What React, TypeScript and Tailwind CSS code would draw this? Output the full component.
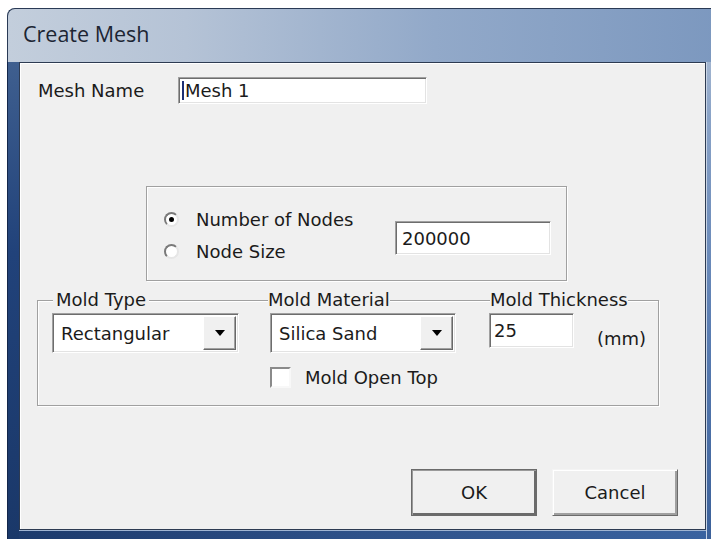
import React from "react";

const ui = { fontFamily: '"DejaVu Sans", Verdana, sans-serif' };

function Sunken({ className = "", children }: { className?: string; children?: React.ReactNode }) {
  return (
    <div
      className={`flex items-center bg-white border border-t-[#a0a0a0] border-l-[#a0a0a0] border-r-white border-b-white shadow-[inset_1px_1px_0_#6d6d6d,inset_-1px_-1px_0_#e3e3e3] ${className}`}
    >
      {children}
    </div>
  );
}

function Combo({ value, width }: { value: string; width: string }) {
  return (
    <Sunken className={`${width} h-[40px] pl-[8px] pr-[2px] justify-between`}>
      <span>{value}</span>
      <div className="w-[33px] h-[34px] flex items-center justify-center bg-[#f0f0f0] border border-t-white border-l-white border-r-[#696969] border-b-[#696969] shadow-[inset_-1px_-1px_0_#a0a0a0]">
        <div className="w-0 h-0 border-l-[5px] border-r-[5px] border-t-[6px] border-l-transparent border-r-transparent border-t-black" />
      </div>
    </Sunken>
  );
}

function Radio({ checked, label }: { checked?: boolean; label: string }) {
  return (
    <div className="flex items-center h-[32px]">
      <div className="w-[15px] h-[15px] rounded-full bg-white border-2 border-t-[#7a7a7a] border-l-[#7a7a7a] border-r-[#e6e6e6] border-b-[#e6e6e6] flex items-center justify-center ml-[17px]">
        {checked && <div className="w-[5px] h-[5px] rounded-full bg-black" />}
      </div>
      <span className="ml-[17px]">{label}</span>
    </div>
  );
}

function PushButton({ label, isDefault }: { label: string; isDefault?: boolean }) {
  return (
    <div
      className={`h-[47px] w-[126px] flex items-center justify-center bg-[#f0f0f0] border ${
        isDefault
          ? "border-[#6b6b6b] shadow-[inset_1px_1px_0_#9a9a9a,inset_-2px_-2px_0_#6b6b6b]"
          : "border-t-[#f4f4f4] border-l-[#f4f4f4] border-r-[#6b6b6b] border-b-[#6b6b6b] shadow-[inset_1px_1px_0_white,inset_-2px_-2px_0_#a0a0a0]"
      }`}
    >
      {label}
    </div>
  );
}

export default function App() {
  return (
    <div className="w-[711px] h-[539px] overflow-hidden bg-white pt-[8px] pl-[7px]">
      <div className="w-[712px] h-[540px] rounded-t-[8px] bg-[linear-gradient(to_bottom,#b9c6d8_0%,#8aa3c7_20%,#5a7db2_60%,#3a5f98_100%)]">
        {/* title bar */}
        <div className="h-[54px] flex items-center pl-[15px] rounded-t-[8px] border-l border-t border-[#2a3a55] bg-[linear-gradient(to_right,#c3cedc_0%,#b5c3d6_25%,#92a9c9_60%,#7c98bf_100%)]">
          <span className="text-[21.5px] text-[#1c2533] pb-[2px]" style={{ fontFamily: '"Open Sans", "Noto Sans", sans-serif' }}>
            Create Mesh
          </span>
        </div>

        <div className="flex">
          {/* left frame edge */}
          <div className="w-[12px] h-[477px] border-l border-[#13264a] bg-[linear-gradient(to_bottom,#3f5f8f_0%,#21427a_40%,#1a3869_100%)]" />

          <div className="flex flex-col">
            {/* client area */}
            <div
              className="w-[687px] h-[468px] bg-[#f0f0f0] border border-[#2d3b52] shadow-[inset_1px_1px_0_#ffffff] text-[18px] text-[#1b1b1b]"
              style={ui}
            >
              <div className="flex items-center mt-[14px]">
                <span className="w-[158px] pl-[18px]">Mesh Name</span>
                <Sunken className="w-[249px] h-[27px] pl-[3px]">
                  <div className="w-[2px] h-[19px] bg-[#1d2f73] mr-[1px]" />
                  <span>Mesh 1</span>
                </Sunken>
              </div>

              {/* node settings */}
              <div className="ml-[126px] mt-[82px] w-[421px] h-[95px] border border-[#a0a0a0] shadow-[inset_1px_1px_0_white,1px_1px_0_white] flex items-start pt-[16px]">
                <div className="flex flex-col w-[248px]">
                  <Radio checked label="Number of Nodes" />
                  <Radio label="Node Size" />
                </div>
                <Sunken className="w-[156px] h-[34px] mt-[18px] pl-[6px]">
                  <span>200000</span>
                </Sunken>
              </div>

              {/* mold settings */}
              <div className="relative ml-[17px] mt-[19px] w-[622px] h-[106px] border border-[#a0a0a0] shadow-[inset_1px_1px_0_white,1px_1px_0_white]">
                <span className="absolute left-[15px] -top-[13px] px-[3px] bg-[#f0f0f0] leading-[24px]">Mold Type</span>
                <span className="absolute left-[230px] -top-[13px] bg-[#f0f0f0] leading-[24px]">Mold Material</span>
                <span className="absolute left-[452px] -top-[13px] bg-[#f0f0f0] leading-[24px]">Mold Thickness</span>

                <div className="flex items-start mt-[12px] ml-[14px]">
                  <Combo value="Rectangular" width="w-[187px]" />
                  <div className="ml-[31px] flex flex-col">
                    <Combo value="Silica Sand" width="w-[186px]" />
                    <div className="flex items-center mt-[11px]">
                      <div className="w-[21px] h-[21px] bg-white border-2 border-t-[#8a8a8a] border-l-[#8a8a8a] border-r-[#f8f8f8] border-b-[#f8f8f8]" />
                      <span className="ml-[14px]">Mold Open Top</span>
                    </div>
                  </div>
                  <Sunken className="ml-[33px] w-[85px] h-[35px] pl-[4px] items-start pt-[3px]">
                    <span>25</span>
                  </Sunken>
                  <span className="ml-[23px] mt-[12px]">(mm)</span>
                </div>
              </div>

              <div className="flex mt-[63px] ml-[391px] gap-[15px]">
                <PushButton label="OK" isDefault />
                <PushButton label="Cancel" />
              </div>
            </div>

            {/* bottom frame edge */}
            <div className="h-[9px] border-t border-[#9fb4d2] bg-[linear-gradient(to_right,#1c3a6c_0%,#2e5189_50%,#3a63a0_100%)]" />
          </div>

          {/* right frame edge */}
          <div className="w-[13px] h-[477px] border-l border-[#c9d5e6]" />
        </div>
      </div>
    </div>
  );
}
